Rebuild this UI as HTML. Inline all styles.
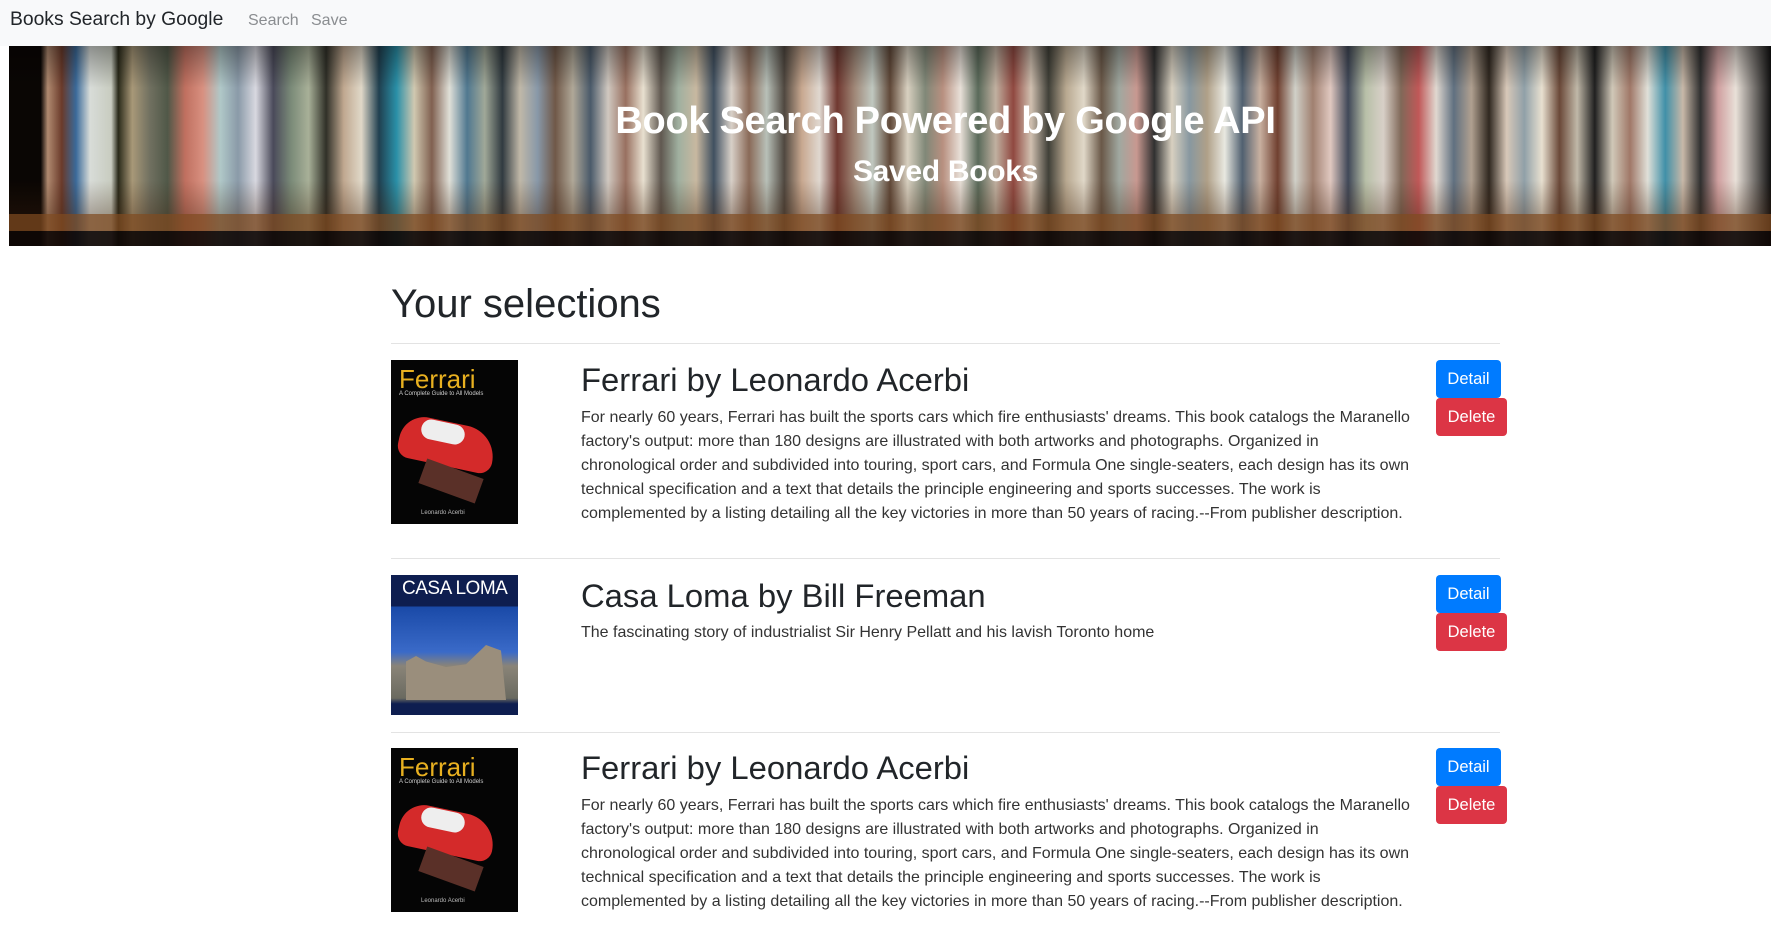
<!DOCTYPE html>
<html><head><meta charset="utf-8"><style>
*{box-sizing:border-box;margin:0;padding:0}
body{width:1771px;height:925px;overflow:hidden;background:#fff;font-family:"Liberation Sans",sans-serif;color:#212529;position:relative}
.nav{position:absolute;left:0;top:0;width:1771px;height:46px;background:#f8f9fa}
.brand{position:absolute;left:10px;top:9px;font-size:19.3px;color:#212529}
.nl{position:absolute;top:12px;font-size:16px;color:#8a8d90}
.banner{position:absolute;left:9px;top:46px;width:1762px;height:200px;overflow:hidden;
background:linear-gradient(90deg,#0a0604 0%,#0a0604 1.8%,#b08a70 2.2%,#6a3a2a 3%,#3a6a9a 3.8%,#d8dcd8 4.6%,#c8ccc0 5.8%,#2a2a1a 6.2%,#a89878 7%,#707060 8%,#505848 9%,#c07060 10%,#d89080 11%,#b0c8c8 12%,#8a9aa8 13%,#d8d8e0 14%,#4a4a5a 15%,#7a8a78 16%,#a8b098 17%,#303028 18%,#c0a890 19%,#e0d8c8 20%,#204050 21%,#2a90a8 22%,#d0c8b0 23%,#806050 24%,#e0e0d8 25%,#507890 26%,#a0a898 27%,#303a40 28%,#c0b8a8 29%,#8898a8 30%,#705848 31%,#b0a898 32%,#4a5a6a 33%,#d0c8c0 34%,#987060 35%,#e8e0d0 36%,#605850 37%,#a0b0a0 38%,#c8b8a0 39%,#405060 40%,#d8d0c8 41%,#8a6a58 42%,#b8c0b8 43%,#504840 44%,#c8a890 45%,#e0d8d0 46%,#703830 47%,#a08878 48%,#c0c8c0 49%,#604838 50%,#d8d0c0 51%,#808878 52%,#b89080 53%,#e8e0d8 54%,#5a6a5a 55%,#c0b0a0 56%,#904840 57%,#d0c0b0 58%,#404038 59%,#b8a890 60%,#e0d8c8 61%,#6a5848 62%,#a0a8a0 63%,#c89890 64%,#303030 65%,#d8d0c0 66%,#8898a0 67%,#b0a088 68%,#e8e8e0 69%,#506070 70%,#c8b0a0 71%,#704030 72%,#d0d0c8 73%,#a08070 74%,#e0c8c0 75%,#404858 76%,#b8c0a8 77%,#d8d0c8 78%,#806858 79%,#c05858 80%,#e0d8d0 81%,#607080 82%,#b0a090 83%,#302820 84%,#d8c8b8 85%,#90a0a8 86%,#e8e0d0 87%,#6a4838 88%,#c0b8a8 89%,#202020 90%,#d0c8b8 91%,#a07868 92%,#e0e0d8 93%,#4090a8 94%,#c8b8a8 95%,#303030 96%,#d0a0a0 97%,#e8e0d8 98%,#101010 100%)}
.shelf{position:absolute;left:0;top:168px;width:100%;height:17px;background:rgba(120,70,30,.8)}
.under{position:absolute;left:0;top:185px;width:100%;height:15px;background:rgba(15,8,5,.92)}
.shade{position:absolute;left:0;top:0;width:100%;height:168px;background:linear-gradient(180deg,rgba(0,0,0,.35),rgba(0,0,0,0) 25%,rgba(0,0,0,0) 80%,rgba(60,30,10,.3))}
.h1{position:absolute;left:120px;width:1651px;text-align:center;color:#fff;font-weight:bold;top:100px;font-size:38px;letter-spacing:-.3px}
.h2{position:absolute;left:120px;width:1651px;text-align:center;color:#fff;font-weight:bold;top:155px;font-size:30px;letter-spacing:-.3px}
.sel{position:absolute;left:391px;top:282px;font-size:40px;font-weight:500}
.hr{position:absolute;left:391px;width:1109px;height:1px;background:#e3e3e3}
.cover{position:absolute;left:391px;width:127px;overflow:hidden}
.t{position:absolute;left:581px;font-size:32.8px;white-space:nowrap}
.d{position:absolute;left:581px;font-size:16px;line-height:24px;white-space:nowrap;color:#333}
.btn{position:absolute;left:1436px;color:#fff;font-size:16.5px;text-align:center;line-height:38px;border-radius:4px;height:38px}
.det{background:#007bff;width:65px}
.del{background:#dc3545;width:71px}
</style></head><body>
<div class="nav"><div class="brand">Books Search by Google</div><div class="nl" style="left:248px">Search</div><div class="nl" style="left:311px">Save</div></div>
<div class="banner"><div class="shade"></div><div class="shelf"></div><div class="under"></div></div>
<div class="h1">Book Search Powered by Google API</div>
<div class="h2">Saved Books</div>
<div class="sel">Your selections</div>
<div class="hr" style="top:343px"></div>

<div class="cover" style="top:360px;height:164px;background:#050505">
<div style="position:absolute;left:8px;top:4px;color:#e8b020;font-size:26px">Ferrari</div>
<div style="position:absolute;left:8px;top:31px;color:#ccc;font-size:6px">A Complete Guide to All Models</div>
<div style="position:absolute;left:8px;top:62px;width:96px;height:44px;background:#d42a2a;border-radius:40px 50px 20px 20px;transform:rotate(12deg)"></div>
<div style="position:absolute;left:30px;top:62px;width:44px;height:20px;background:#eee;border-radius:10px;transform:rotate(12deg)"></div>
<div style="position:absolute;left:30px;top:108px;width:60px;height:26px;background:#5a3028;transform:rotate(20deg)"></div>
<div style="position:absolute;left:30px;top:150px;color:#bbb;font-size:6px">Leonardo Acerbi</div>
</div>
<div class="t" style="top:361px">Ferrari by Leonardo Acerbi</div>
<div class="d" style="top:406px">For nearly 60 years, Ferrari has built the sports cars which fire enthusiasts' dreams. This book catalogs the Maranello<br>factory's output: more than 180 designs are illustrated with both artworks and photographs. Organized in<br>chronological order and subdivided into touring, sport cars, and Formula One single-seaters, each design has its own<br>technical specification and a text that details the principle engineering and sports successes. The work is<br>complemented by a listing detailing all the key victories in more than 50 years of racing.--From publisher description.</div>
<div class="btn det" style="top:360px">Detail</div>
<div class="btn del" style="top:398px">Delete</div>
<div class="hr" style="top:558px"></div>

<div class="cover" style="top:575px;height:140px;background:linear-gradient(180deg,#0e1e50 0,#0e1e50 22%,#1a4aa8 23%,#3a6ac8 55%,#8a8478 65%,#6a6a60 88%,#0e1e50 92%)">
<div style="position:absolute;left:11px;top:3px;color:#fff;font-size:19px;letter-spacing:-.5px">CASA LOMA</div>
<div style="position:absolute;left:15px;top:70px;width:100px;height:55px;background:#9a8e7c;clip-path:polygon(0 30%,10% 20%,20% 30%,40% 40%,60% 35%,80% 0,95% 10%,100% 100%,0 100%)"></div>
</div>
<div class="t" style="top:577px">Casa Loma by Bill Freeman</div>
<div class="d" style="top:621px">The fascinating story of industrialist Sir Henry Pellatt and his lavish Toronto home</div>
<div class="btn det" style="top:575px">Detail</div>
<div class="btn del" style="top:613px">Delete</div>
<div class="hr" style="top:732px"></div>

<div class="cover" style="top:748px;height:164px;background:#050505">
<div style="position:absolute;left:8px;top:4px;color:#e8b020;font-size:26px">Ferrari</div>
<div style="position:absolute;left:8px;top:31px;color:#ccc;font-size:6px">A Complete Guide to All Models</div>
<div style="position:absolute;left:8px;top:62px;width:96px;height:44px;background:#d42a2a;border-radius:40px 50px 20px 20px;transform:rotate(12deg)"></div>
<div style="position:absolute;left:30px;top:62px;width:44px;height:20px;background:#eee;border-radius:10px;transform:rotate(12deg)"></div>
<div style="position:absolute;left:30px;top:108px;width:60px;height:26px;background:#5a3028;transform:rotate(20deg)"></div>
<div style="position:absolute;left:30px;top:150px;color:#bbb;font-size:6px">Leonardo Acerbi</div>
</div>
<div class="t" style="top:749px">Ferrari by Leonardo Acerbi</div>
<div class="d" style="top:794px">For nearly 60 years, Ferrari has built the sports cars which fire enthusiasts' dreams. This book catalogs the Maranello<br>factory's output: more than 180 designs are illustrated with both artworks and photographs. Organized in<br>chronological order and subdivided into touring, sport cars, and Formula One single-seaters, each design has its own<br>technical specification and a text that details the principle engineering and sports successes. The work is<br>complemented by a listing detailing all the key victories in more than 50 years of racing.--From publisher description.</div>
<div class="btn det" style="top:748px">Detail</div>
<div class="btn del" style="top:786px">Delete</div>
</body></html>
